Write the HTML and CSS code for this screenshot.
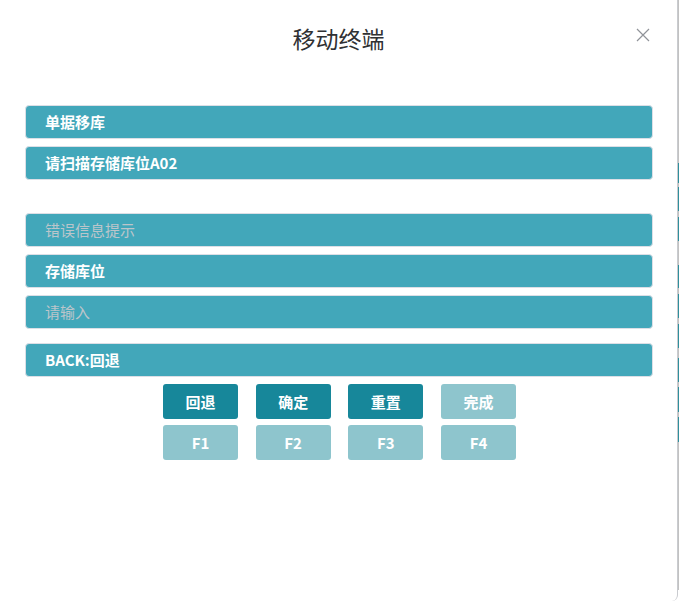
FILE: index.html
```html
<!DOCTYPE html>
<html lang="zh-CN">
<head>
<meta charset="utf-8">
<title>移动终端</title>
<link rel="stylesheet" href="styles.css">
</head>
<body>
<div class="page">
  <div class="dialog">
    <header class="dlg-head">
      <h2 class="dlg-title">移动终端</h2>
      <button class="dlg-close" aria-label="关闭">
        <svg width="14" height="14" viewBox="0 0 14 14"><path d="M1 1 L13 13 M13 1 L1 13" stroke="#909399" stroke-width="1.2" fill="none"/></svg>
      </button>
    </header>
    <div class="dlg-body">
      <div class="group">
        <div class="bar strong">单据移库</div>
        <div class="bar strong">请扫描存储库位A02</div>
      </div>
      <div class="group group-mid">
        <div class="bar hint">错误信息提示</div>
        <div class="bar strong">存储库位</div>
        <div class="bar hint">请输入</div>
      </div>
      <div class="group group-back">
        <div class="bar strong">BACK:回退</div>
      </div>
      <div class="keys">
        <button class="key dark">回退</button>
        <button class="key dark">确定</button>
        <button class="key dark">重置</button>
        <button class="key light">完成</button>
        <button class="key light">F1</button>
        <button class="key light">F2</button>
        <button class="key light">F3</button>
        <button class="key light">F4</button>
      </div>
    </div>
  </div>
  <div class="edge"></div>
</div>
</body>
</html>
```
FILE: styles.css
```css
* { box-sizing: border-box; }
html, body { margin: 0; padding: 0; background: #ffffff; }
body {
  font-family: "Noto Sans CJK SC", "Noto Sans", "Liberation Sans", sans-serif;
  width: 679px;
  height: 601px;
  overflow: hidden;
}
.page {
  display: flex;
  width: 679px;
  height: 601px;
}
.dialog {
  position: relative;
  width: 678px;
  height: 601px;
  background: #ffffff;
  border-right: 1px solid #c9cbcf;
  border-bottom-right-radius: 6px;
  display: flex;
  flex-direction: column;
}
.edge {
  width: 1px;
  height: 601px;
  background: linear-gradient(to bottom,
    #c2c2c2 0, #c2c2c2 163px,
    #2f8f9c 163px, #2f8f9c 183px,
    #c2c2c2 183px, #c2c2c2 187px,
    #2f8f9c 187px, #2f8f9c 211px,
    #c2c2c2 211px, #c2c2c2 217px,
    #2f8f9c 217px, #2f8f9c 241px,
    #c2c2c2 241px, #c2c2c2 265px,
    #2f8f9c 265px, #2f8f9c 288px,
    #c2c2c2 288px, #c2c2c2 294px,
    #2f8f9c 294px, #2f8f9c 318px,
    #c2c2c2 318px, #c2c2c2 324px,
    #2f8f9c 324px, #2f8f9c 348px,
    #c2c2c2 348px, #c2c2c2 358px,
    #2f8f9c 358px, #2f8f9c 382px,
    #c2c2c2 382px, #c2c2c2 387px,
    #2f8f9c 387px, #2f8f9c 412px,
    #c2c2c2 412px, #c2c2c2 417px,
    #2f8f9c 417px, #2f8f9c 442px,
    #c2c2c2 442px, #c2c2c2 590px,
    #ffffff 590px);
}
.dlg-head {
  height: 80px;
  padding-bottom: 4px;
  display: flex;
  align-items: center;
  justify-content: center;
}
.dlg-title {
  margin: 0;
  font-size: 23px;
  font-weight: 400;
  line-height: 30px;
  color: #303133;
}
.dlg-close {
  position: absolute;
  top: 28px;
  right: 27px;
  width: 14px;
  height: 14px;
  padding: 0;
  border: 0;
  background: transparent;
  display: flex;
}
.dlg-body {
  padding: 25px 24px 0 25px;
  display: flex;
  flex-direction: column;
}
.group {
  display: flex;
  flex-direction: column;
  gap: 7px;
}
.group-mid { margin-top: 33px; }
.group-back { margin-top: 14px; }
.bar {
  height: 34px;
  border: 1px solid #dcdfe6;
  border-radius: 4px;
  background: #42a7ba;
  padding-left: 19px;
  display: flex;
  align-items: center;
  font-size: 15px;
  line-height: 20px;
}
.strong {
  color: #ffffff;
  font-weight: 700;
}
.hint {
  color: #bcc5ca;
  font-weight: 400;
}
.keys {
  margin-top: 7px;
  padding-left: 1px;
  display: grid;
  grid-template-columns: repeat(4, 75px);
  grid-auto-rows: 35px;
  column-gap: 17.7px;
  row-gap: 6px;
  justify-content: center;
}
.key {
  border: 0;
  border-radius: 3px;
  color: #ffffff;
  font-family: "Noto Sans CJK SC", "Noto Sans", "Liberation Sans", sans-serif;
  font-size: 15px;
  font-weight: 700;
  padding: 0;
}
.dark { background: #17879a; }
.light { background: #8ec5cd; }
```
